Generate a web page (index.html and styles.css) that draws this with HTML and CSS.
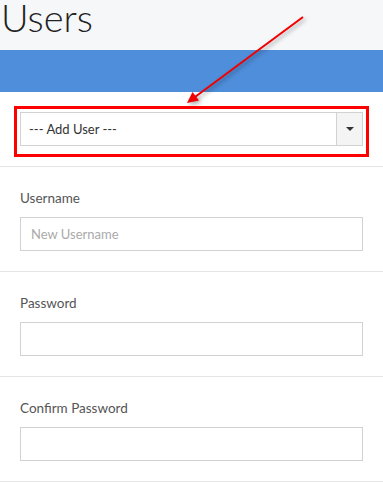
FILE: index.html
```html
<!DOCTYPE html>
<html lang="en">
<head>
    <meta charset="UTF-8">
    <meta name="viewport" content="width=device-width, initial-scale=1.0">
    <title>Users</title>
    <link rel="stylesheet" href="styles.css">
</head>
<body>
<div class="page-header">
    <h1>Users</h1>
</div>
<div class="box-bar"></div>
<div class="box-body">
    <div class="highlight">
        <div class="select-box">
            <span class="select-text">--- Add User ---</span>
            <span class="select-arrow"><b class="caret"></b></span>
        </div>
    </div>
    <div class="form-row">
        <label>Username</label>
        <input type="text" placeholder="New Username">
    </div>
    <div class="form-row">
        <label>Password</label>
        <input type="password">
    </div>
    <div class="form-row">
        <label>Confirm Password</label>
        <input type="password">
    </div>
</div>
<!-- annotation arrow drawn on top of the screenshot -->
<svg class="pointer" width="383" height="482" viewBox="0 0 383 482">
    <line x1="303" y1="17" x2="195" y2="97" stroke="#f00000" stroke-width="2"/>
    <polygon points="187,103 199,100.5 192.5,92" fill="#f00000"/>
</svg>
</body>
</html>
```

FILE: styles.css
```css
body {
    margin: 0;
    padding: 0;
    background-color: #ffffff;
    font-family: Lato, "Open Sans", sans-serif;
    color: #333;
    position: relative;
    overflow: hidden;
}
.page-header {
    height: 50px;
    background-color: #f6f7f9;
    overflow: hidden;
}
.page-header h1 {
    margin: 0;
    padding-left: 1px;
    font-size: 38px;
    font-weight: 300;
    line-height: 30px;
    padding-top: 2px;
    color: #222;
}
.box-bar {
    height: 42px;
    background-color: #4f8edb;
}
.box-body {
    padding-top: 14px;
}
.highlight {
    margin: 0 14px;
    border: 3px solid #ff0000;
    padding: 3px 3px 8px 3px;
}
.select-box {
    display: flex;
    height: 34px;
    border: 1px solid #d2d2d2;
    box-sizing: border-box;
}
.select-text {
    flex: 1;
    padding-left: 8px;
    font-size: 13px;
    line-height: 32px;
    color: #333;
}
.select-arrow {
    width: 25px;
    display: flex;
    align-items: center;
    justify-content: center;
    background-color: #f4f4f4;
    border-left: 1px solid #d2d2d2;
}
.caret {
    width: 0;
    height: 0;
    border-left: 4px solid transparent;
    border-right: 4px solid transparent;
    border-top: 4px solid #333;
}
.form-row {
    margin-top: 9px;
    border-top: 1px solid #e5e5e5;
    padding: 21px 20px 20px 20px;
}
.form-row + .form-row {
    margin-top: 0;
}
.form-row:last-child {
    border-bottom: 1px solid #e5e5e5;
}
.form-row label {
    display: block;
    font-size: 13.5px;
    line-height: 20px;
    color: #555;
    margin-bottom: 9px;
}
.form-row input {
    display: block;
    width: 100%;
    height: 34px;
    box-sizing: border-box;
    border: 1px solid #d2d2d6;
    padding: 0 10px;
    font-family: Lato, "Open Sans", sans-serif;
    font-size: 13px;
    color: #333;
}
.form-row input::placeholder {
    color: #aaa;
}
.pointer {
    position: absolute;
    top: 0;
    left: 0;
    pointer-events: none;
    filter: drop-shadow(2px 2px 2px rgba(0, 0, 0, 0.35));
}
```
